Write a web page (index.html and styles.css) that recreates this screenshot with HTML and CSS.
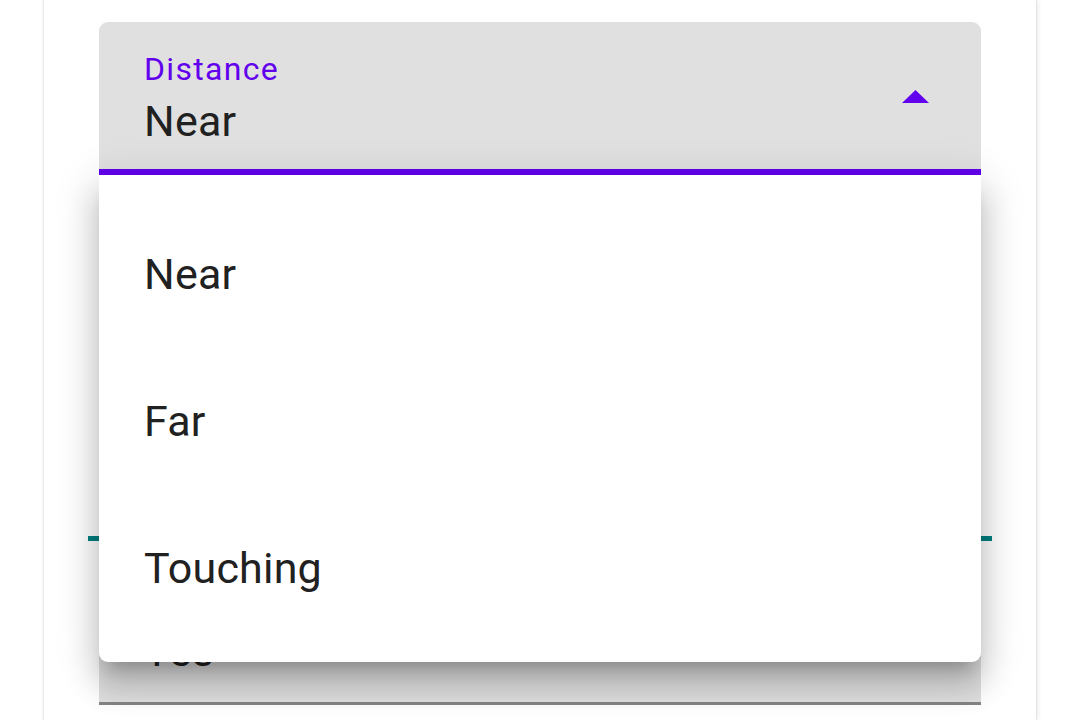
FILE: index.html
```html
<!DOCTYPE html>
<html lang="en">
<head>
<meta charset="utf-8">
<title>Distance select</title>
<link rel="stylesheet" href="styles.css">
</head>
<body>
<div class="card">
  <div class="select">
    <div class="field field-active">
      <div class="field-text">
        <div class="field-label">Distance</div>
        <div class="field-value">Near</div>
      </div>
      <svg class="arrow" width="27" height="13" viewBox="0 0 27 13" aria-hidden="true">
        <path d="M0 13 L13.5 0 L27 13 Z" fill="#6200ee"/>
      </svg>
    </div>
    <ul class="menu">
      <li class="menu-item">Near</li>
      <li class="menu-item">Far</li>
      <li class="menu-item">Touching</li>
    </ul>
  </div>
  <div class="track"></div>
  <div class="field field-idle">
    <div class="field-text">
      <div class="field-label field-label-hidden"></div>
      <div class="field-value">Yes</div>
    </div>
  </div>
</div>
</body>
</html>
```

FILE: styles.css
```css
html, body {
  margin: 0;
  padding: 0;
  background: #ffffff;
  overflow: hidden;
  height: 720px;
}

body {
  font-family: Roboto, "Noto Sans", "Liberation Sans", sans-serif;
  color: rgba(0, 0, 0, 0.87);
}

.card {
  margin-left: 43px;
  width: 882px;
  height: 698px;
  background: #ffffff;
  border-left: 1px solid #e9e9e9;
  border-right: 1px solid #e4e4e4;
  box-shadow: 2px 0 4px rgba(0, 0, 0, 0.06), -1px 0 2px rgba(0, 0, 0, 0.03);
  padding: 22px 55px 0;
  box-sizing: content-box;
}

.select {
  position: relative;
  z-index: 2;
}

.field {
  display: flex;
  background: #e0e0e0;
  border-radius: 9px 9px 0 0;
  padding: 31px 52px 23px 45px;
}

.field-active {
  border-bottom: 6px solid #6200ee;
}

.field-idle {
  border-bottom: 3px solid #858585;
  padding-bottom: 26px;
}

.field-text {
  flex: 1;
}

.field-label {
  font-size: 32px;
  line-height: 32px;
  height: 32px;
  letter-spacing: 1.3px;
  color: #6200ee;
}

.field-value {
  margin-top: 11px;
  font-size: 43px;
  line-height: 50px;
  letter-spacing: 0.2px;
  color: #212121;
}

.arrow {
  display: block;
  margin-top: 37px;
  flex: none;
}

.menu {
  position: absolute;
  top: 100%;
  left: 0;
  right: 0;
  margin: 0;
  padding: 26px 0 20px;
  list-style: none;
  background: #ffffff;
  border-radius: 0 0 9px 9px;
  box-shadow: 0 15px 15px -9px rgba(0, 0, 0, 0.2),
              0 24px 30px 3px rgba(0, 0, 0, 0.14),
              0 9px 42px 6px rgba(0, 0, 0, 0.12);
}

.menu-item {
  height: 147px;
  line-height: 147px;
  padding-left: 45px;
  font-size: 43px;
  letter-spacing: 0.2px;
  color: #212121;
}

.track {
  margin: 361px -11px 11px;
  height: 5px;
  background: #00807f;
}
```
